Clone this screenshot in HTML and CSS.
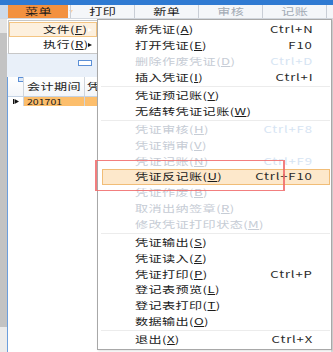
FILE: index.html
```html
<!DOCTYPE html>
<html>
  <head>
    <title>凭证录入</title>
    <link rel="stylesheet" href="styles.css">
  </head>
  <body>
    <div class="app">
      <div class="titlebar"></div>
      <div class="toolbar">
        <div class="toolbar-edge"></div>
        <div class="tool-menu"><span class="lbl">菜单</span><span class="caret"></span></div>
        <div class="tool"><span class="lbl">打印</span></div>
        <div class="tool"><span class="lbl">新单</span></div>
        <div class="tool off"><span class="lbl">审核</span></div>
        <div class="tool off"><span class="lbl">记账</span></div>
        <div class="tool tool-rest"></div>
      </div>
      <div class="workspace">
        <div class="side"></div>
        <div class="panel">
          <div class="panel-top"></div>
          <div class="panel-bar"><span class="mini-box"></span></div>
          <div class="grid">
            <div class="grid-head">
              <div class="cell corner"><span class="corner-tab"></span></div>
              <div class="cell period"><span class="lbl">会计期间</span></div>
              <div class="cell voucher"><span class="lbl">凭</span></div>
            </div>
            <div class="grid-row current">
              <div class="cell corner">
                <svg width="6" height="5" viewBox="0 0 6 5"><rect x="0" y="0" width="1" height="5" fill="#111"/><path d="M1.5 0 L6 2.5 L1.5 5 Z" fill="#111"/></svg>
              </div>
              <div class="cell period"><span class="lbl num">201701</span></div>
              <div class="cell voucher"></div>
            </div>
          </div>
        </div>
        <div class="side-right"></div>
      </div>

      <!-- first level of the 菜单 dropdown -->
      <div class="submenu">
        <div class="sub-item active"><span class="lbl">文件(<u>F</u>)</span><span class="arrow"></span></div>
        <div class="sub-item"><span class="lbl">执行(<u>R</u>)</span><span class="arrow"></span></div>
      </div>

      <!-- 文件 menu -->
      <div class="menu">
        <div class="menu-item"><span class="lbl">新凭证(<u>A</u>)</span><span class="lbl key">Ctrl+N</span></div>
        <div class="menu-item"><span class="lbl">打开凭证(<u>E</u>)</span><span class="lbl key">F10</span></div>
        <div class="menu-item off"><span class="lbl">删除作废凭证(<u>D</u>)</span><span class="lbl key">Ctrl+D</span></div>
        <div class="menu-item"><span class="lbl">插入凭证(<u>I</u>)</span><span class="lbl key">Ctrl+I</span></div>
        <div class="menu-sep"></div>
        <div class="menu-item"><span class="lbl">凭证预记账(<u>Y</u>)</span></div>
        <div class="menu-item"><span class="lbl">无结转凭证记账(<u>W</u>)</span></div>
        <div class="menu-sep"></div>
        <div class="menu-item off"><span class="lbl">凭证审核(<u>H</u>)</span><span class="lbl key">Ctrl+F8</span></div>
        <div class="menu-item off"><span class="lbl">凭证销审(<u>V</u>)</span></div>
        <div class="menu-item off"><span class="lbl">凭证记账(<u>N</u>)</span><span class="lbl key">Ctrl+F9</span></div>
        <div class="menu-item active"><span class="lbl">凭证反记账(<u>U</u>)</span><span class="lbl key">Ctrl+F10</span></div>
        <div class="menu-item off"><span class="lbl">凭证作废(<u>B</u>)</span></div>
        <div class="menu-item off"><span class="lbl">取消出纳签章(<u>R</u>)</span></div>
        <div class="menu-item off"><span class="lbl">修改凭证打印状态(<u>M</u>)</span></div>
        <div class="menu-sep"></div>
        <div class="menu-item"><span class="lbl">凭证输出(<u>S</u>)</span></div>
        <div class="menu-item"><span class="lbl">凭证读入(<u>Z</u>)</span></div>
        <div class="menu-item"><span class="lbl">凭证打印(<u>P</u>)</span><span class="lbl key">Ctrl+P</span></div>
        <div class="menu-item"><span class="lbl">登记表预览(<u>L</u>)</span></div>
        <div class="menu-item"><span class="lbl">登记表打印(<u>T</u>)</span></div>
        <div class="menu-item"><span class="lbl">数据输出(<u>O</u>)</span></div>
        <div class="menu-sep"></div>
        <div class="menu-item"><span class="lbl">退出(<u>X</u>)</span><span class="lbl key">Ctrl+X</span></div>
      </div>

      <!-- red marker drawn over the screenshot -->
      <div class="callout"></div>
    </div>
  </body>
</html>
```

FILE: styles.css
```css
* {
  box-sizing: border-box;
}

body {
  margin: 0;
  width: 333px;
  height: 352px;
  overflow: hidden;
  font-family: "Noto Sans CJK SC", "Noto Sans", sans-serif;
  font-size: 9.5px;
  color: #1b1b1b;
  background-color: #ffffff;
}

.app {
  position: relative;
  width: 333px;
  height: 352px;
}

/* the captured window is stretched sideways, so labels are too */
.lbl {
  display: inline-block;
  white-space: nowrap;
  letter-spacing: 0.3px;
  line-height: 1;
  transform: scaleX(1.38);
}

u {
  text-decoration: underline;
}

.titlebar {
  height: 5px;
  background-color: #2f7ad2;
}

.toolbar {
  display: flex;
  height: 14px;
  background-color: #f4f6f9;
  border-bottom: 1px solid #d3d8df;
}

.toolbar-edge {
  width: 8px;
  background-color: #cddaea;
}

.tool-menu {
  width: 60px;
  display: flex;
  align-items: center;
  padding-left: 17px;
  background-color: #f3913f;
  margin-right: 2px;
}

.tool-menu .lbl {
  transform-origin: left center;
}

.caret {
  margin-left: 24px;
  width: 0;
  height: 0;
  border-left: 2.5px solid transparent;
  border-right: 2.5px solid transparent;
  border-top: 3px solid #fbd2ad;
}

.tool {
  width: 64px;
  display: flex;
  align-items: center;
  justify-content: center;
  border-left: 1px solid #c9ced6;
}

.tool.off {
  color: #a3abb5;
}

.tool-rest {
  flex: 1;
}

.workspace {
  display: flex;
  height: 333px;
}

.side {
  width: 7px;
  background-image: linear-gradient(#e4e4e4 0, #e4e4e4 14px, #c3c3c3 14px, #c3c3c3 308px, #ebebeb 308px);
}

.panel {
  flex: 1;
  display: flex;
  flex-direction: column;
}

.panel-top {
  height: 34px;
  background-color: #ffffff;
}

.panel-bar {
  height: 24px;
  background-color: #e9f0f9;
  padding: 7px 0 0 71px;
}

.mini-box {
  display: block;
  width: 14px;
  height: 6px;
  background-color: #ffffff;
  border: 1px solid #5b8fd6;
}

.grid {
  flex: 1;
  border-left: 1px solid #6c9edc;
  background-color: #ffffff;
}

.grid-head,
.grid-row {
  display: flex;
}

.grid-head {
  height: 20px;
  background-image: linear-gradient(#ffffff, #f3f6fa);
  border-bottom: 1px solid #c5d3e4;
}

.grid-row {
  height: 9px;
}

.cell {
  display: flex;
  align-items: center;
  border-right: 1px solid #cfd5dc;
  overflow: hidden;
}

.cell .lbl {
  transform-origin: left center;
}

.corner {
  width: 16px;
  position: relative;
}

.period {
  width: 61px;
  padding-left: 3px;
}

.voucher {
  flex: 1;
  padding-left: 2px;
}

.corner-tab {
  position: absolute;
  left: 10px;
  top: 0;
  width: 10px;
  height: 5px;
  background-color: #dbe8f8;
  border: 1px solid #5b8fd6;
}

.grid-row .corner {
  justify-content: center;
  padding-left: 1px;
}

.grid-row.current .period,
.grid-row.current .voucher {
  background-color: #fcbe6c;
}

.num {
  font-size: 8px;
  letter-spacing: 0;
  transform: scaleX(1.32);
}

.side-right {
  width: 2px;
  background-color: #dedede;
}

/* dropdowns */
.submenu {
  position: absolute;
  left: 8px;
  top: 20px;
  width: 90px;
  height: 34px;
  padding-top: 1px;
  background-color: #ffffff;
  border: 1px solid #c7c7c7;
}

.sub-item {
  display: flex;
  align-items: center;
  height: 15px;
  padding: 0 4px 0 33px;
  border: 1px solid transparent;
}

.sub-item .lbl {
  transform-origin: left center;
}

.arrow {
  margin-left: auto;
  width: 0;
  height: 0;
  border-top: 2.5px solid transparent;
  border-bottom: 2.5px solid transparent;
  border-left: 4px solid #111111;
}

.sub-item.active {
  background-color: #fdf0de;
  border-color: #f4c583;
}

.sub-item.active .arrow {
  border-left-color: #ffffff;
}

.menu {
  position: absolute;
  left: 97px;
  top: 19px;
  width: 235px;
  height: 331px;
  padding-top: 2px;
  background-color: #ffffff;
  border: 1px solid #a8a8a8;
  box-shadow: 1px 1px 2px rgba(0, 0, 0, 0.12);
}

.menu-item {
  display: flex;
  align-items: center;
  justify-content: space-between;
  height: 15.8px;
  margin: 0 1px 0 4px;
  padding: 0 16px 0 32px;
  border: 1px solid transparent;
}

.menu-item .lbl {
  transform-origin: left center;
}

.menu-item .key {
  transform-origin: right center;
  letter-spacing: 0.6px;
  color: #2a2a2a;
}

.menu-item.off {
  color: #c6ccd5;
}

.menu-item.off .key {
  color: #d6e4f3;
}

.menu-item.active {
  background-color: #fde8cb;
  border-color: #f1bd77;
}

.menu-sep {
  height: 1px;
  margin: 0.75px 1px 0.75px 3px;
  background-color: #ececec;
}

.callout {
  position: absolute;
  left: 95px;
  top: 160px;
  width: 190px;
  height: 31px;
  border-style: solid;
  border-color: rgba(240, 104, 104, 0.85);
  border-width: 1px 2px;
}
```
